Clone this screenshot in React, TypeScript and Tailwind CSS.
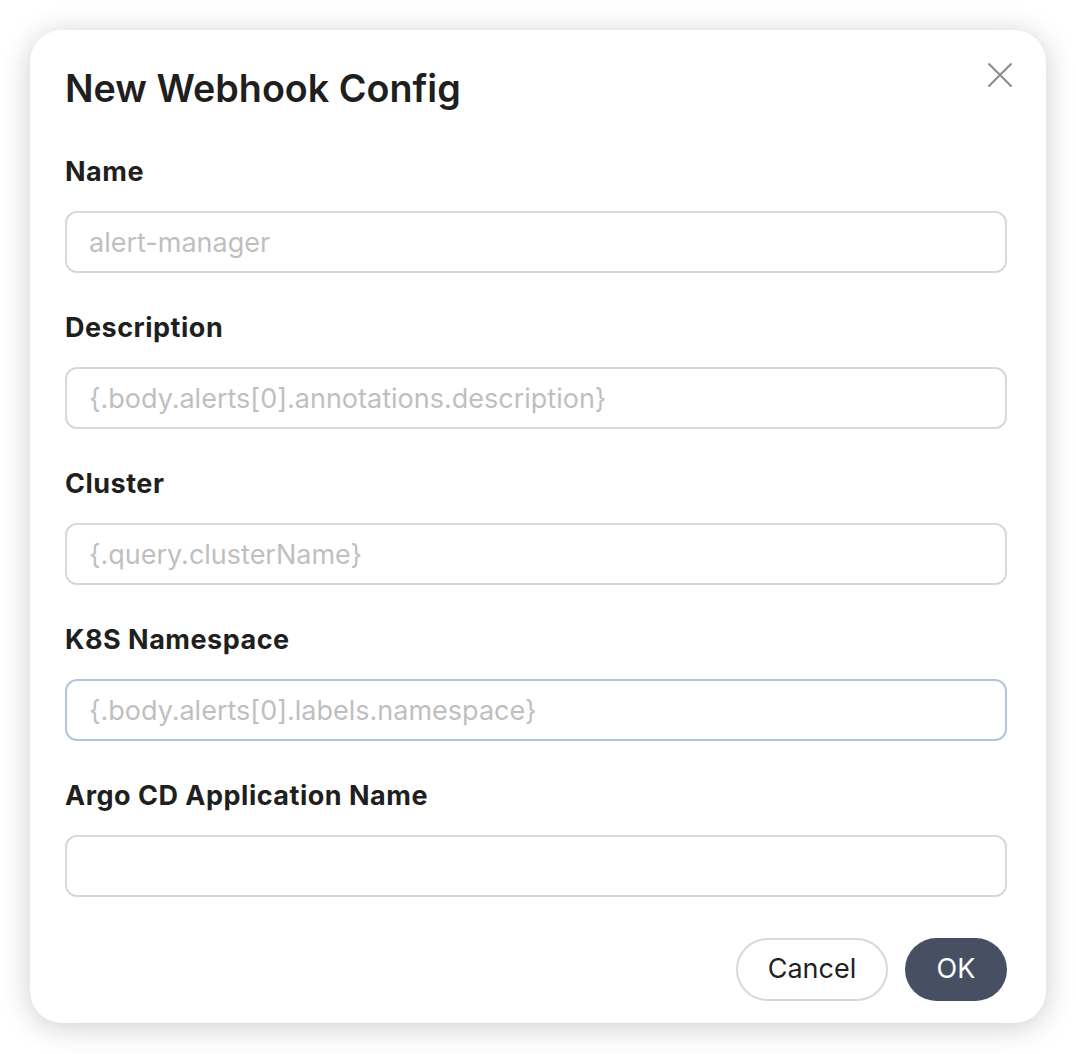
const fields = [
  { label: 'Name', placeholder: 'alert-manager' },
  { label: 'Description', placeholder: '{.body.alerts[0].annotations.description}' },
  { label: 'Cluster', placeholder: '{.query.clusterName}' },
  { label: 'K8S Namespace', placeholder: '{.body.alerts[0].labels.namespace}', focused: true },
  { label: 'Argo CD Application Name', placeholder: '' },
];

function Field({ label, placeholder, focused }: { label: string; placeholder: string; focused?: boolean }) {
  return (
    <div className="flex flex-col">
      <label className="text-[27px] leading-[36px] font-bold tracking-[0.5px] text-[#1f1f1f] mb-[21px]">{label}</label>
      <input
        placeholder={placeholder}
        className={
          'h-[62px] w-full rounded-[12px] border-2 px-[22px] text-[27px] text-[#1f1f1f] placeholder:text-[#bfbfbf] outline-none ' +
          (focused ? 'border-[#b3c5dd]' : 'border-[#d9d9d9]')
        }
      />
    </div>
  );
}

export default function App() {
  return (
    <div className="min-h-screen bg-white p-[30px]" style={{ fontFamily: 'Inter, "Noto Sans", sans-serif' }}>
      <div className="relative w-full rounded-[32px] bg-white pl-[35px] pr-[39px] pt-[36px] pb-[22px] shadow-[0_4px_30px_rgba(0,0,0,0.2)]">
        <button className="absolute right-[33px] top-[32px] block h-[26px] w-[26px] text-[#8a8a8a]">
          <svg width="26" height="26" viewBox="0 0 26 26" fill="none" stroke="currentColor" strokeWidth="2">
            <path d="M1.5 1.5 L24.5 24.5 M24.5 1.5 L1.5 24.5" />
          </svg>
        </button>
        <h1 className="text-[37.7px] leading-[44px] font-semibold text-[#1f1f1f] mb-[44px]">New Webhook Config</h1>
        <div className="flex flex-col gap-[37px]">
          {fields.map((f) => (
            <Field key={f.label} {...f} />
          ))}
        </div>
        <div className="mt-[41px] flex justify-end gap-[17px]">
          <button className="h-[63px] w-[152px] rounded-full border-2 border-[#d9d9d9] bg-white text-[27px] text-[#1f1f1f]">
            Cancel
          </button>
          <button className="h-[63px] w-[102px] rounded-full bg-[#475063] text-[27px] text-white">OK</button>
        </div>
      </div>
    </div>
  );
}
